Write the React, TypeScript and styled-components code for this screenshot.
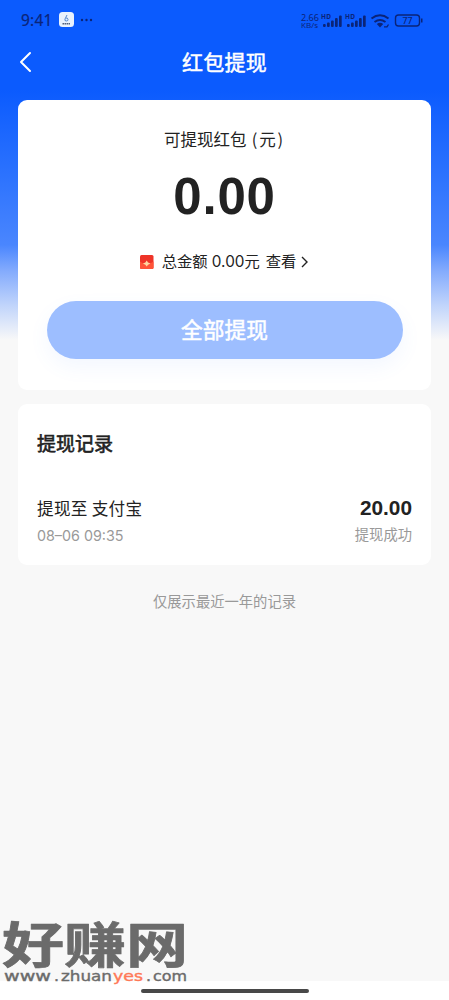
import React from 'react';
import styled, { createGlobalStyle } from 'styled-components';

const GlobalStyle = createGlobalStyle`
  * { box-sizing: border-box; }
  body { margin: 0; background: #f8f8f8; }
`;

const cjk = `'Noto Sans CJK SC', sans-serif`;
const latin = `Inter, 'Noto Sans CJK SC', sans-serif`;
const numeric = `'Liberation Sans', Arial, sans-serif`;

const Screen = styled.div`
  position: relative;
  display: flex;
  flex-direction: column;
  height: 1000px;
  overflow: hidden;
  color: #222;
  font-family: ${cjk};
  background: #f8f8f8 linear-gradient(#0b5bfe 0, #0b5bfe 90px, #2a71fe 170px, #4a86fe 245px, #82aafd 270px, #c0d4fb 305px, #f8f8f8 340px) no-repeat;
`;

const StatusBar = styled.div`
  display: flex;
  align-items: center;
  height: 40px;
  padding: 0 26px 0 21px;
  color: #0b2478;
`;
const Clock = styled.span`
  width: 38px;
  font: 400 15.5px/20px 'Noto Sans', sans-serif;
  letter-spacing: 0.2px;
  -webkit-text-stroke: 0.2px #0b2478;
`;
const StatusIcons = styled.svg`
  display: block;
  margin-left: auto;
`;
const NavBar = styled.header`
  display: grid;
  grid-template-columns: 40px 1fr 40px;
  align-items: center;
  height: 44px;
  padding: 0 10px;
`;
const Title = styled.h1`
  margin: 0 0 2px;
  text-align: center;
  color: #fff;
  font: 400 21px/30px ${cjk};
  letter-spacing: 0.3px;
  -webkit-text-stroke: 0.5px #fff;
`;
const Card = styled.section<{ $height: number }>`
  display: flex;
  flex-direction: column;
  flex: none;
  height: ${p => p.$height}px;
  margin: 0 18px 14px;
  border-radius: 9px;
  background: #fff;
`;
const Balance = styled(Card)`
  align-items: center;
  margin-top: 16px;
  padding-top: 27px;
`;
const Label = styled.div`
  font-size: 16.5px;
  line-height: 24px;
`;
const Unit = styled.span`
  margin-left: 1.5px;
  letter-spacing: 1.8px;
`;
const Amount = styled.div`
  margin-top: 16px;
  font: 700 51px/60px ${numeric};
  letter-spacing: 0.8px;
`;
const Total = styled.div`
  display: flex;
  align-items: center;
  margin-top: 23px;
  font: 400 15.3px/24px ${latin};
`;
const View = styled.span`
  margin: 0 5px 0 6px;
`;
const Withdraw = styled.button`
  width: 356px;
  height: 58px;
  margin-top: 27px;
  padding: 0 0 2px;
  border: 0;
  border-radius: 29px;
  background: #9dbeff;
  box-shadow: 0 8px 20px rgba(80, 140, 255, 0.07);
  color: #fff;
  font: 400 21.7px/32px ${cjk};
  -webkit-text-stroke: 0.5px #fff;
`;
const Records = styled(Card)`
  padding: 24px 19px 0;
`;
const Heading = styled.h2`
  margin: 0 0 35px;
  font: 400 19px/30px ${cjk};
  -webkit-text-stroke: 0.6px #222;
`;
const Row = styled.div`
  display: flex;
  justify-content: space-between;
`;
const Column = styled.div<{ $end?: boolean }>`
  display: flex;
  flex-direction: column;
  align-items: ${p => (p.$end ? 'flex-end' : 'flex-start')};
`;
const Target = styled.div`
  font-size: 16.6px;
  line-height: 30px;
  letter-spacing: 0.3px;
`;
const Value = styled.div`
  font: 700 20.8px/30px ${numeric};
`;
const Muted = styled.div<{ $raised?: boolean }>`
  margin-top: ${p => (p.$raised ? 0 : 1)}px;
  color: #999;
  font: 400 14.3px/24px ${latin};
`;
const Note = styled.p`
  margin: 10px 0 0;
  text-align: center;
  color: #999;
  font-size: 14.3px;
  line-height: 24px;
`;
const HomeArea = styled.div`
  display: flex;
  justify-content: center;
  height: 19px;
  margin-top: auto;
  padding-top: 8px;
  background: #fff;
`;
const HomeBar = styled.div`
  width: 168px;
  height: 4px;
  border-radius: 2px;
  background: #484848;
`;
const Watermark = styled.svg`
  position: absolute;
  left: 0;
  top: 890px;
`;

const Signal = ({ x }: { x: number }) => (
  <g transform={`translate(${x} 0)`}>
    <text x="-1" y="8.500" fontSize="6.500" fontWeight="700" textLength="10">HD</text>
    {[3, 4.5, 6.5, 9, 11.5].map((h, i) => (
      <rect key={h} x={1 + i * 4} y={17 - h} width="2.7" height={h} rx="1" />
    ))}
  </g>
);

// Each part of the address keeps its own start and width
const address = [
  { text: 'www', x: 4, width: 47 },
  { text: '.', x: 54, width: 5 },
  { text: 'zhuan', x: 61, width: 51 },
  { text: 'yes', x: 113, width: 30, accent: true },
  { text: '.', x: 146, width: 5 },
  { text: 'com', x: 153, width: 34 },
];

export default function App() {
  return (
    <>
      <GlobalStyle />
      <Screen>
        <StatusBar>
          <Clock>9:41</Clock>
          <svg width="36" height="16" viewBox="0 0 36 16">
            <rect width="15" height="15" rx="3.5" fill="#e9f2fd" />
            <path d="M8 3 6 7q-.7 2 1.3 2T9 7.300 7 6" fill="none" stroke="#5488cf" />
            <path d="M3.500 11.800h8" stroke="#52617c" strokeWidth="1.500" strokeDasharray="1.500 .5" />
            <g fill="#0b2478"><circle cx="23" cy="8" r="1.200" /><circle cx="27.500" cy="8" r="1.200" /><circle cx="32" cy="8" r="1.200" /></g>
          </svg>
          <StatusIcons width="123" height="20" viewBox="0 0 123 20" fill="#0b2478" fontFamily="Noto Sans, sans-serif">
            <text x="1" y="10.500" fontSize="8" textLength="18" lengthAdjust="spacingAndGlyphs">2.66</text>
            <text x="1" y="18" fontSize="7.500" textLength="17" lengthAdjust="spacingAndGlyphs">KB/s</text>
            <Signal x={22} />
            <Signal x={46} />
            <g fill="none" stroke="#0b2478" strokeWidth="2">
              <path d="M71.500 8.500q8.500-6.500 17 0M74.500 12q5.500-4 11 0" />
            </g>
            <path d="M76.800 14q3.200-2.400 6.400 0L80 17.500z" />
            <path d="M84 16.800h3l1.500-2.300" fill="none" stroke="#0b2478" strokeWidth="1.300" />
            <rect x="95.500" y="5" width="24" height="11" rx="3" fill="none" stroke="#0b2478" strokeWidth="1.400" />
            <path d="M121 8.500h1.500v4H121z" />
            <text x="102.500" y="13.700" fontSize="8.700" fontWeight="500" textLength="10">77</text>
          </StatusIcons>
        </StatusBar>
        <NavBar>
          <svg width="22" height="24" viewBox="0 0 22 24" fill="none" stroke="#fff" strokeWidth="2" strokeLinecap="round" strokeLinejoin="round">
            <path d="m20 3-9 9 9 9" />
          </svg>
          <Title>红包提现</Title>
        </NavBar>
        <Balance $height={290}>
          <Label>可提现红包 <Unit>(元)</Unit></Label>
          <Amount>0.00</Amount>
          <Total>
            <svg width="22" height="16" viewBox="0 0 22 16">
              <rect y="1" width="13.500" height="14" rx="1.500" fill="#ee3428" />
              <path d="M0 7.500q6.700 5 13.500 0v6q0 1.500-1.500 1.500H1.500Q0 15 0 13.500z" fill="#ff5438" />
              <path d="m6.700 6.500 1.300 1.900 2.500 1.100L8 10.700l-1.300 1.800-1.300-1.800-2.500-1.200 2.500-1.100z" fill="#ffd7a0" />
            </svg>
            <span>总金额 0.00元</span>
            <View>查看</View>
            <svg width="8" height="12" viewBox="0 0 8 12" fill="none" stroke="#222" strokeWidth="1.400"><path d="m1 1 5 5-5 5" /></svg>
          </Total>
          <Withdraw>全部提现</Withdraw>
        </Balance>
        <Records $height={161}>
          <Heading>提现记录</Heading>
          <Row>
            <Column>
              <Target>提现至 支付宝</Target>
              <Muted>08–06 09:35</Muted>
            </Column>
            <Column $end>
              <Value>20.00</Value>
              <Muted $raised>提现成功</Muted>
            </Column>
          </Row>
        </Records>
        <Note>仅展示最近一年的记录</Note>
        <HomeArea><HomeBar /></HomeArea>
        <Watermark width="200" height="105" viewBox="0 0 200 105" fill="#6b6b6b">
          <text transform="translate(2 73) scale(1.280 1)" fontSize="48.500" fontWeight="700" fontFamily="Noto Sans CJK SC, sans-serif" stroke="#6b6b6b" strokeWidth=".7" strokeLinejoin="round">好赚网</text>
          {address.map(part => (
            <text key={part.x} x={part.x} y="90.500" fontSize="14.500" fontFamily="DejaVu Sans, sans-serif" textLength={part.width} lengthAdjust="spacingAndGlyphs" fill={part.accent ? '#ff7857' : '#6b6b6b'} stroke={part.accent ? '#ff7857' : '#6b6b6b'} strokeWidth=".4">{part.text}</text>
          ))}
        </Watermark>
      </Screen>
    </>
  );
}
